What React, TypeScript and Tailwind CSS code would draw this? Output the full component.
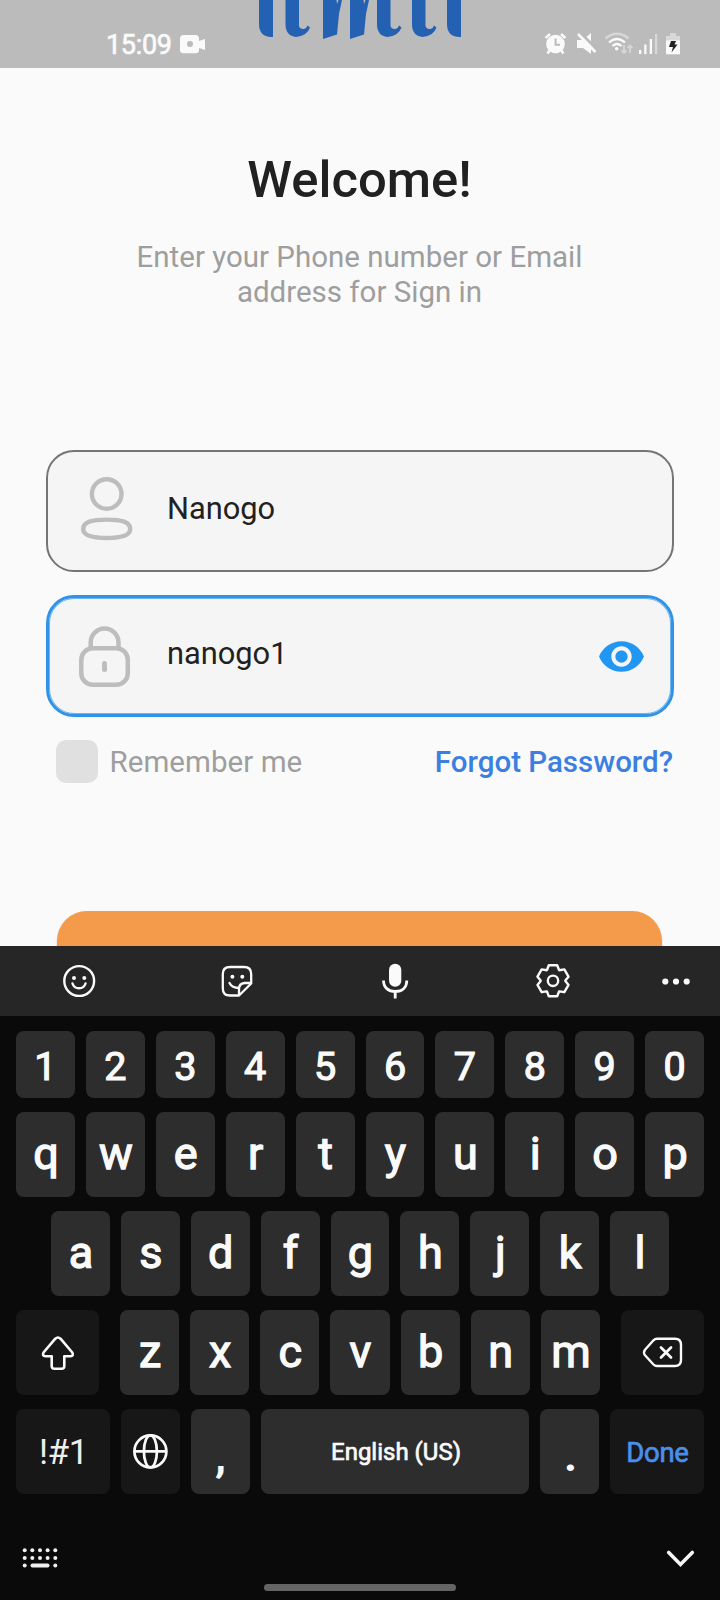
import type { ReactNode } from "react";

const WHITE = "#fafafa";

function Logo() {
  return (
    <svg className="absolute left-[250px] top-0" width="220" height="42" viewBox="250 0 220 42" fill="#2461b3">
      <path d="M259 0H273V37H270Q259 36 259 24Z" />
      <path d="M285.5 0H299V26Q300 29.500 304 29Q306.500 28.500 307.500 25.500L310 27.500Q307 36 296 37Q285.500 36 285.500 24Z" />
      <path d="M323 0H336.500L337 4L338.500 0H342L339 14L337 34.500L323 39Z" />
      <path d="M350 0H363.500L364 4L365.500 0H369L366 14L364 34.500L350 39Z" />
      <path d="M377 0H390.500V26Q391.500 29.500 395.500 29Q398 28.500 399 25.500L401.500 27.500Q398.500 36 387.500 37Q377 36 377 24Z" />
      <path d="M412 0H425.500V26Q426.500 29.500 430.500 29Q433 28.500 434 25.500L436.500 27.500Q433.500 36 422.500 37Q412 36 412 24Z" />
      <path d="M447 0H461V37H458Q447 36 447 24Z" />
    </svg>
  );
}

function StatusBar() {
  return (
    <header className="relative flex h-[68px] shrink-0 items-start bg-[#bbbbbb] pl-[106px] pt-[30px] text-[#fafafa]">
      <Logo />
      <span className="w-[74px] text-[27px] leading-[31px] tracking-[-0.3px] [-webkit-text-stroke:0.7px_#fafafa]">15:09</span>
      <svg width="26" height="20" viewBox="180 34 26 20" className="mt-1" fill={WHITE}>
        <path fillRule="evenodd" d="M183.500 35H195.500Q199 35 199 38.500V41L205 39V50L199 48V50Q199 53.300 195.500 53.300H183.500Q180 53.300 180 50V38.500Q180 35 183.500 35ZM190 41A3 3 0 1 0 190 47A3 3 0 1 0 190 41Z" />
      </svg>
      <svg width="138" height="24" viewBox="543 32 138 24" className="ml-[337px] mt-[2px]" fill="none">
        <g stroke={WHITE}>
          <circle cx="555.5" cy="44" r="9.3" fill={WHITE} stroke="none" />
          <path d="M545.500 38L550 34M565.500 38L561 34" strokeWidth="2.400" />
          <path d="M550 50L547.500 53.500M561 50L563.500 53.500" strokeWidth="2.600" />
        </g>
        <path d="M555.600 38.500V44.800H560" stroke="#bbb" strokeWidth="2" />
        <path d="M577 40H583L591 33V54L583 48H577Z" fill={WHITE} />
        <path d="M579.500 32L598 50.500" stroke="#bbb" strokeWidth="3" />
        <path d="M578 34L595.500 52" stroke={WHITE} strokeWidth="2.600" />
        <g strokeWidth="2.300">
          <path d="M605.500 38.500Q617 29 628.500 38.500" stroke="#d8d8d8" />
          <path d="M609 42.500Q617 35.500 625 42.500" stroke={WHITE} />
          <path d="M612.500 46Q617 42 621.500 46" stroke={WHITE} />
        </g>
        <circle cx="616.700" cy="48.700" r="1.800" fill={WHITE} />
        <path d="M624 45V53M621.500 50.500L624 53L626.500 50.500M630 53V46M627.500 48L630 45.500L632.500 48" stroke="#d6d6d6" strokeWidth="1.800" />
        <path d="M639 50H641.300V54H639ZM644.200 44.500H646.500V54H644.200ZM649.700 39H652V54H649.700Z" fill={WHITE} />
        <path d="M655 34H657.200V54H655Z" fill="#d8d8d8" />
        <path d="M670 33H676V36H680V41H666V36H670Z" fill="#d8d8d8" />
        <path d="M666 40.500H680V54.300H666Z" fill={WHITE} />
        <path d="M671 41H676L674.500 44.500H677.500L671.500 52.500L673 47H669Z" fill="#222" />
      </svg>
    </header>
  );
}

function Field({ icon, value, focused, trailing }: { icon: ReactNode; value: string; focused?: boolean; trailing?: ReactNode }) {
  return (
    <div
      className={
        "flex h-[122px] w-[628px] items-center rounded-[28px] bg-[#f5f5f5] " +
        (focused ? "border-[3px] border-[#2f94e8] shadow-[inset_0_0_0_1px_#6db4ef]" : "border-2 border-[#757575]")
      }
    >
      <div className={focused ? "w-[118px] pl-[26px]" : "w-[119px] pb-[4px] pl-[27px]"}>{icon}</div>
      <span className="-mt-[5px] flex-1 text-[30.800px] leading-[36px] text-[#212121]">{value}</span>
      {trailing}
    </div>
  );
}

function Form() {
  return (
    <main className="flex h-[878px] shrink-0 flex-col items-center overflow-hidden bg-[#fafafa]">
      <h1 className="mt-[82px] pr-px text-[50.800px] font-medium leading-[60px] text-[#212121]">Welcome!</h1>
      <p className="mt-[30px] w-[500px] pr-px text-center text-[29.500px] leading-[35px] text-[#9e9e9e]">
        Enter your Phone number or Email address for Sign in
      </p>
      <div className="mt-[140px] flex flex-col gap-[23px]">
        <Field
          value="Nanogo"
          icon={
            <svg width="60" height="70" viewBox="75 474 60 70" fill="none" stroke="#bdbdbd" strokeWidth="4.400">
              <circle cx="106.700" cy="494" r="14.800" />
              <path d="M106.700 519.600C122 519.600 130.200 522 130.200 529C130.200 535.500 122 538 106.700 538C91.500 538 83.200 535.500 83.200 529C83.200 522 91.500 519.600 106.700 519.600Z" />
            </svg>
          }
        />
        <Field
          focused
          value="nanogo1"
          icon={
            <svg width="60" height="70" viewBox="75 621 60 70" fill="none" stroke="#bdbdbd" strokeWidth="4.500">
              <rect x="81.300" y="648.300" width="46.500" height="36.400" rx="11.500" />
              <path d="M90.700 648V642.500A13.900 13.900 0 0 1 118.500 642.500V648" />
              <path d="M104.500 663.500V669.500" strokeLinecap="round" strokeWidth="5" />
            </svg>
          }
          trailing={
            <svg width="49" height="49" viewBox="0 0 24 24" className="mr-[25px]" fill="#2196f3">
              <path d="M12 4.500C7 4.500 2.730 7.610 1 12c1.730 4.390 6 7.500 11 7.500s9.270-3.110 11-7.500c-1.730-4.390-6-7.500-11-7.500zM12 17c-2.760 0-5-2.240-5-5s2.240-5 5-5 5 2.240 5 5-2.240 5-5 5zm0-8c-1.660 0-3 1.340-3 3s1.340 3 3 3 3-1.340 3-3-1.340-3-3-3z" />
            </svg>
          }
        />
      </div>
      <div className="mt-[23px] flex h-[43px] w-[628px] items-center pl-[10px] pr-px">
        <span className="h-[43px] w-[42px] rounded-[10px] bg-[#e0e0e0]" />
        <span className="ml-[11.500px] flex-1 text-[29.500px] leading-[34px] tracking-[0.05px] text-[#9e9e9e]">Remember me</span>
        <a className="text-[29.500px] font-medium leading-[34px] text-[#3b7fe2]">Forgot Password?</a>
      </div>
      <div className="mr-px mt-[128px] h-[110px] w-[605px] shrink-0 rounded-[30px] bg-[#f39b4b] shadow-[0_1px_2px_rgba(0,0,0,0.2)]" />
    </main>
  );
}

function gearPath(cx: number, cy: number) {
  const tooth = [[-6, -10.8], [-4.2, -15.5], [4.2, -15.5], [6, -10.8]];
  const points: string[] = [];
  for (let i = 0; i < 6; i++) {
    const a = (i * Math.PI) / 3;
    for (const [x, y] of tooth) {
      points.push(`${cx + x * Math.cos(a) - y * Math.sin(a)},${cy + x * Math.sin(a) + y * Math.cos(a)}`);
    }
  }
  return "M" + points.join("L") + "Z";
}

function Toolbar() {
  const slot = "flex w-[158px] justify-center";
  return (
    <div className="flex h-[70px] shrink-0 items-center bg-[#262626]">
      <div className={slot}>
        <svg width="40" height="40" viewBox="59 961 40 40" fill="none" stroke={WHITE} strokeWidth="2.400">
          <circle cx="79.200" cy="981" r="14.900" />
          <path d="M72.500 983.500Q74 988.300 79 988.300Q84 988.300 85.500 983.500" strokeLinecap="round" />
          <circle cx="74" cy="978" r="2" fill={WHITE} stroke="none" />
          <circle cx="84.300" cy="978" r="2" fill={WHITE} stroke="none" />
        </svg>
      </div>
      <div className={slot}>
        <svg width="40" height="40" viewBox="217 961 40 40" fill="none" stroke={WHITE} strokeWidth="2.300" strokeLinejoin="round">
          <path d="M230 967H244Q251.200 967 251.200 974V983.500L239 995.500H230Q222.800 995.500 222.800 988.500V974Q222.800 967 230 967Z" />
          <path d="M251 983H244.500Q239 983.500 239 989V995" />
          <path d="M229.500 983Q232 988 239 988" strokeLinecap="round" />
          <circle cx="232.400" cy="976.700" r="2" fill={WHITE} stroke="none" />
          <circle cx="242.300" cy="976.700" r="2" fill={WHITE} stroke="none" />
        </svg>
      </div>
      <div className={slot}>
        <svg width="40" height="40" viewBox="375 961 40 40" fill="none">
          <rect x="389" y="963.800" width="12.300" height="23" rx="6.100" fill={WHITE} />
          <path d="M383.500 980.500C383.500 987.500 388.500 991.500 395.200 991.500C402 991.500 406.800 987.500 406.800 980.500M395.200 991.500V998.500" stroke={WHITE} strokeWidth="2.800" />
        </svg>
      </div>
      <div className={slot}>
        <svg width="40" height="40" viewBox="533 961 40 40" fill="none" stroke={WHITE} strokeWidth="2.400" strokeLinejoin="round">
          <path d={gearPath(553, 980.8)} />
          <circle cx="553" cy="980.800" r="5.200" />
        </svg>
      </div>
      <div className="flex w-[88px] justify-center">
        <svg width="40" height="40" viewBox="656 961 40 40" fill={WHITE}>
          <circle cx="665.300" cy="981.500" r="3.100" />
          <circle cx="676" cy="981.500" r="3.100" />
          <circle cx="686.700" cy="981.500" r="3.100" />
        </svg>
      </div>
    </div>
  );
}

function LetterKeys({ letters }: { letters: string }) {
  return (
    <>
      {letters.split("").map((c) => (
        <button key={c} className="flex h-full flex-1 basis-0 justify-center rounded-[8px] bg-[#2d2d2d] pl-px text-[45px] leading-[84px] [-webkit-text-stroke:1.300px_#fafafa]">
          {c}
        </button>
      ))}
    </>
  );
}

function Keyboard() {
  const dark = "flex h-full shrink-0 items-center justify-center rounded-[8px] bg-[#171717]";
  return (
    <section className="flex flex-1 flex-col bg-[#0a0a0a] text-[#fafafa]">
      <div className="mt-[15px] flex h-[67px] gap-[11px] px-4">
        {"1234567890".split("").map((c) => (
          <button key={c} className="flex h-full flex-1 basis-0 justify-center rounded-[8px] bg-[#2d2d2d] text-[39.500px] leading-[72px] [-webkit-text-stroke:1.200px_#fafafa]">
            {c}
          </button>
        ))}
      </div>
      <div className="mt-[14px] flex h-[85px] gap-[11px] px-4">
        <LetterKeys letters="qwertyuiop" />
      </div>
      <div className="mt-[14px] flex h-[85px] gap-[11px] px-[51px]">
        <LetterKeys letters="asdfghjkl" />
      </div>
      <div className="mt-[14px] flex h-[85px] gap-[21px] px-4">
        <button className={dark + " w-[83px]"}>
          <svg width="40" height="40" viewBox="37.500 1332.500 40 40" fill="none" stroke={WHITE} strokeWidth="2.600" strokeLinejoin="round">
            <path d="M54.800 1338.200Q57.400 1335.800 60 1338.200L71.800 1352Q73.500 1355.500 70 1355.700H63.800V1365.500Q63.800 1368.300 61 1368.300H54Q51.200 1368.300 51.200 1365.500V1355.700H45Q41.300 1355.500 43 1352Z" />
          </svg>
        </button>
        <div className="flex h-full flex-1 gap-[11px]">
          <LetterKeys letters="zxcvbnm" />
        </div>
        <button className={dark + " w-[83px]"}>
          <svg width="44" height="40" viewBox="641 1333 44 40" fill="none" stroke={WHITE} strokeWidth="2.400" strokeLinejoin="round" strokeLinecap="round">
            <path d="M657 1338.800H675Q681 1338.800 681 1345V1360Q681 1366 675 1366H657Q655 1366 653.500 1364.500L645 1355.300Q643 1352.500 645 1349.800L653.500 1340.300Q655 1338.800 657 1338.800Z" />
            <path d="M661 1347.500L671 1357.500M671 1347.500L661 1357.500" strokeWidth="2.700" />
          </svg>
        </button>
      </div>
      <div className="mt-[14px] flex h-[85px] gap-[11px] px-4">
        <button className={dark + " w-[94px] pl-px pt-[3px] text-[35px] tracking-[-0.4px] text-[#eeeeee]"}>!#1</button>
        <button className={dark + " w-[59px]"}>
          <svg width="40" height="40" viewBox="131 1432 40 40" fill="none" stroke={WHITE} strokeWidth="2.700">
            <circle cx="150.400" cy="1451.400" r="16" />
            <ellipse cx="150.400" cy="1451.400" rx="6.500" ry="16" />
            <path d="M134 1451.400H167" />
          </svg>
        </button>
        <button className="flex h-full w-[59px] justify-center rounded-[8px] bg-[#2d2d2d] text-[45px] font-bold leading-[93px]">,</button>
        <button className="h-full flex-1 rounded-[8px] bg-[#2d2d2d] pl-[2px] text-[24px] leading-[87px] [-webkit-text-stroke:0.700px_#fafafa]">English (US)</button>
        <button className="flex h-full w-[59px] justify-center rounded-[8px] bg-[#2d2d2d] pl-[2px] text-[45px] font-bold leading-[93px]">.</button>
        <button className={dark + " w-[94px] pl-px pt-[2px] text-[27.500px] tracking-[-0.3px] text-[#4a8fec] [-webkit-text-stroke:0.700px_#4a8fec]"}>Done</button>
      </div>
      <div className="mt-[46px] flex h-9 items-center justify-between pl-5 pr-[24px]">
        <svg width="40" height="24" viewBox="20 1546 40 24" fill="#f0f0f0">
          {[1550.3, 1558, 1565.5].map((y, row) =>
            [24.7, 32.3, 40, 47.6, 55.3].map((x, col) =>
              row === 2 && col > 0 && col < 4 ? null : <circle key={`${x}-${y}`} cx={x} cy={y} r="2" />
            )
          )}
          <rect x="30.500" y="1563.500" width="19" height="4" rx="2" />
        </svg>
        <svg width="32" height="24" viewBox="664 1546 32 24" fill="none" stroke="#f5f5f5" strokeWidth="3.600" strokeLinecap="round">
          <path d="M668.700 1552.500L680.500 1564.500L692.300 1552.500" />
        </svg>
      </div>
      <div className="ml-[264px] mt-2 h-[7px] w-[192px] rounded-full bg-[#646464]" />
    </section>
  );
}

export default function App() {
  return (
    <div className="flex h-[1600px] w-[720px] flex-col overflow-hidden bg-[#fafafa] font-['Roboto',sans-serif]">
      <StatusBar />
      <Form />
      <Toolbar />
      <Keyboard />
    </div>
  );
}
